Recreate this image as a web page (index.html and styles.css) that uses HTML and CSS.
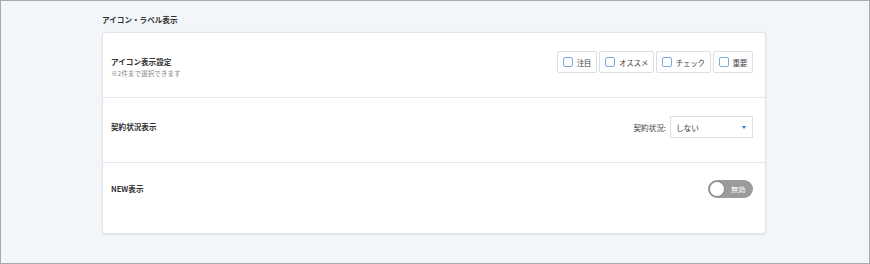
FILE: index.html
```html
<!DOCTYPE html>
<html lang="ja">
<head>
    <meta charset="UTF-8">
    <title>アイコン・ラベル表示</title>
    <link rel="stylesheet" href="styles.css">
</head>
<body>
    <div class="frame">
        <div class="section">
            <h3 class="section-title">アイコン・ラベル表示</h3>
            <div class="card">
                <div class="row">
                    <div class="row-label with-note">
                        <p class="label">アイコン表示設定</p>
                        <p class="note">※2件まで選択できます</p>
                    </div>
                    <div class="checks">
                        <label class="check"><span class="box"></span>注目</label>
                        <label class="check"><span class="box"></span>オススメ</label>
                        <label class="check"><span class="box"></span>チェック</label>
                        <label class="check"><span class="box"></span>重要</label>
                    </div>
                </div>
                <div class="row">
                    <div class="row-label">
                        <p class="label">契約状況表示</p>
                    </div>
                    <div class="field">
                        <span class="field-name">契約状況:</span>
                        <div class="select">
                            <span>しない</span>
                            <span class="caret"></span>
                        </div>
                    </div>
                </div>
                <div class="row last">
                    <div class="row-label">
                        <p class="label">NEW表示</p>
                    </div>
                    <div class="toggle">
                        <span class="knob"></span>
                        <span class="toggle-text">無効</span>
                    </div>
                </div>
            </div>
        </div>
    </div>
</body>
</html>
```

FILE: styles.css
```css
body {
    margin: 0;
    font-family: "Noto Sans CJK JP", "Noto Sans", sans-serif;
    color: #333;
}
.frame {
    box-sizing: border-box;
    width: 870px;
    height: 264px;
    border: 1px solid #a9a9a9;
    background-color: #f3f6f9;
    padding: 13px 0 0 101px;
}
.section {
    width: 664px;
}
.section-title {
    margin: 0 0 6px 0;
    font-size: 7.6px;
    font-weight: bold;
    line-height: 12px;
    color: #333;
}
.card {
    background: #fff;
    border: 1px solid #e1e4e8;
    border-radius: 3px;
    box-shadow: 0 1px 2px rgba(0, 0, 0, 0.08);
    padding-bottom: 6px;
}
.row {
    display: flex;
    align-items: center;
    justify-content: space-between;
    height: 22px;
    padding: 18px 12px 24px 8px;
    border-bottom: 1px solid #e4e6e9;
}
.row.last {
    border-bottom: none;
    padding-top: 15px;
    padding-bottom: 27px;
}
.row-label.with-note {
    padding-top: 10px;
}
.label {
    margin: 0;
    font-size: 7.6px;
    font-weight: bold;
    line-height: 10px;
    color: #333;
}
.note {
    margin: 2px 0 0 0;
    font-size: 6.6px;
    line-height: 9px;
    color: #888;
}
.checks {
    display: flex;
    gap: 2px;
}
.check {
    display: flex;
    align-items: center;
    box-sizing: border-box;
    height: 22px;
    padding: 0 5px 0 5px;
    border: 1px solid #dcdfe3;
    border-radius: 2px;
    background: #fff;
    font-size: 7.6px;
    letter-spacing: -0.4px;
    color: #444;
}
.box {
    box-sizing: border-box;
    width: 10px;
    height: 10px;
    margin-right: 4px;
    border: 1.5px solid #7eaadf;
    border-radius: 2px;
}
.field {
    display: flex;
    align-items: center;
    font-size: 7.6px;
    color: #444;
}
.field-name {
    margin-right: 4px;
}
.select {
    display: flex;
    align-items: center;
    justify-content: space-between;
    box-sizing: border-box;
    width: 83px;
    height: 22px;
    padding: 0 6px 0 5px;
    border: 1px solid #dcdfe3;
    background: #fff;
    color: #333;
}
.caret {
    width: 0;
    height: 0;
    border-left: 2.5px solid transparent;
    border-right: 2.5px solid transparent;
    border-top: 3px solid #2a7ae2;
}
.toggle {
    display: flex;
    align-items: center;
    box-sizing: border-box;
    width: 45px;
    height: 18px;
    padding: 0 0 0 1px;
    border-radius: 9px;
    background: #9b9b9b;
}
.knob {
    box-sizing: border-box;
    width: 16px;
    height: 16px;
    border-radius: 50%;
    background: #fff;
    border: 1px solid #8a8a8a;
}
.toggle-text {
    margin-left: 6px;
    font-size: 7.2px;
    color: #fff;
}
```
